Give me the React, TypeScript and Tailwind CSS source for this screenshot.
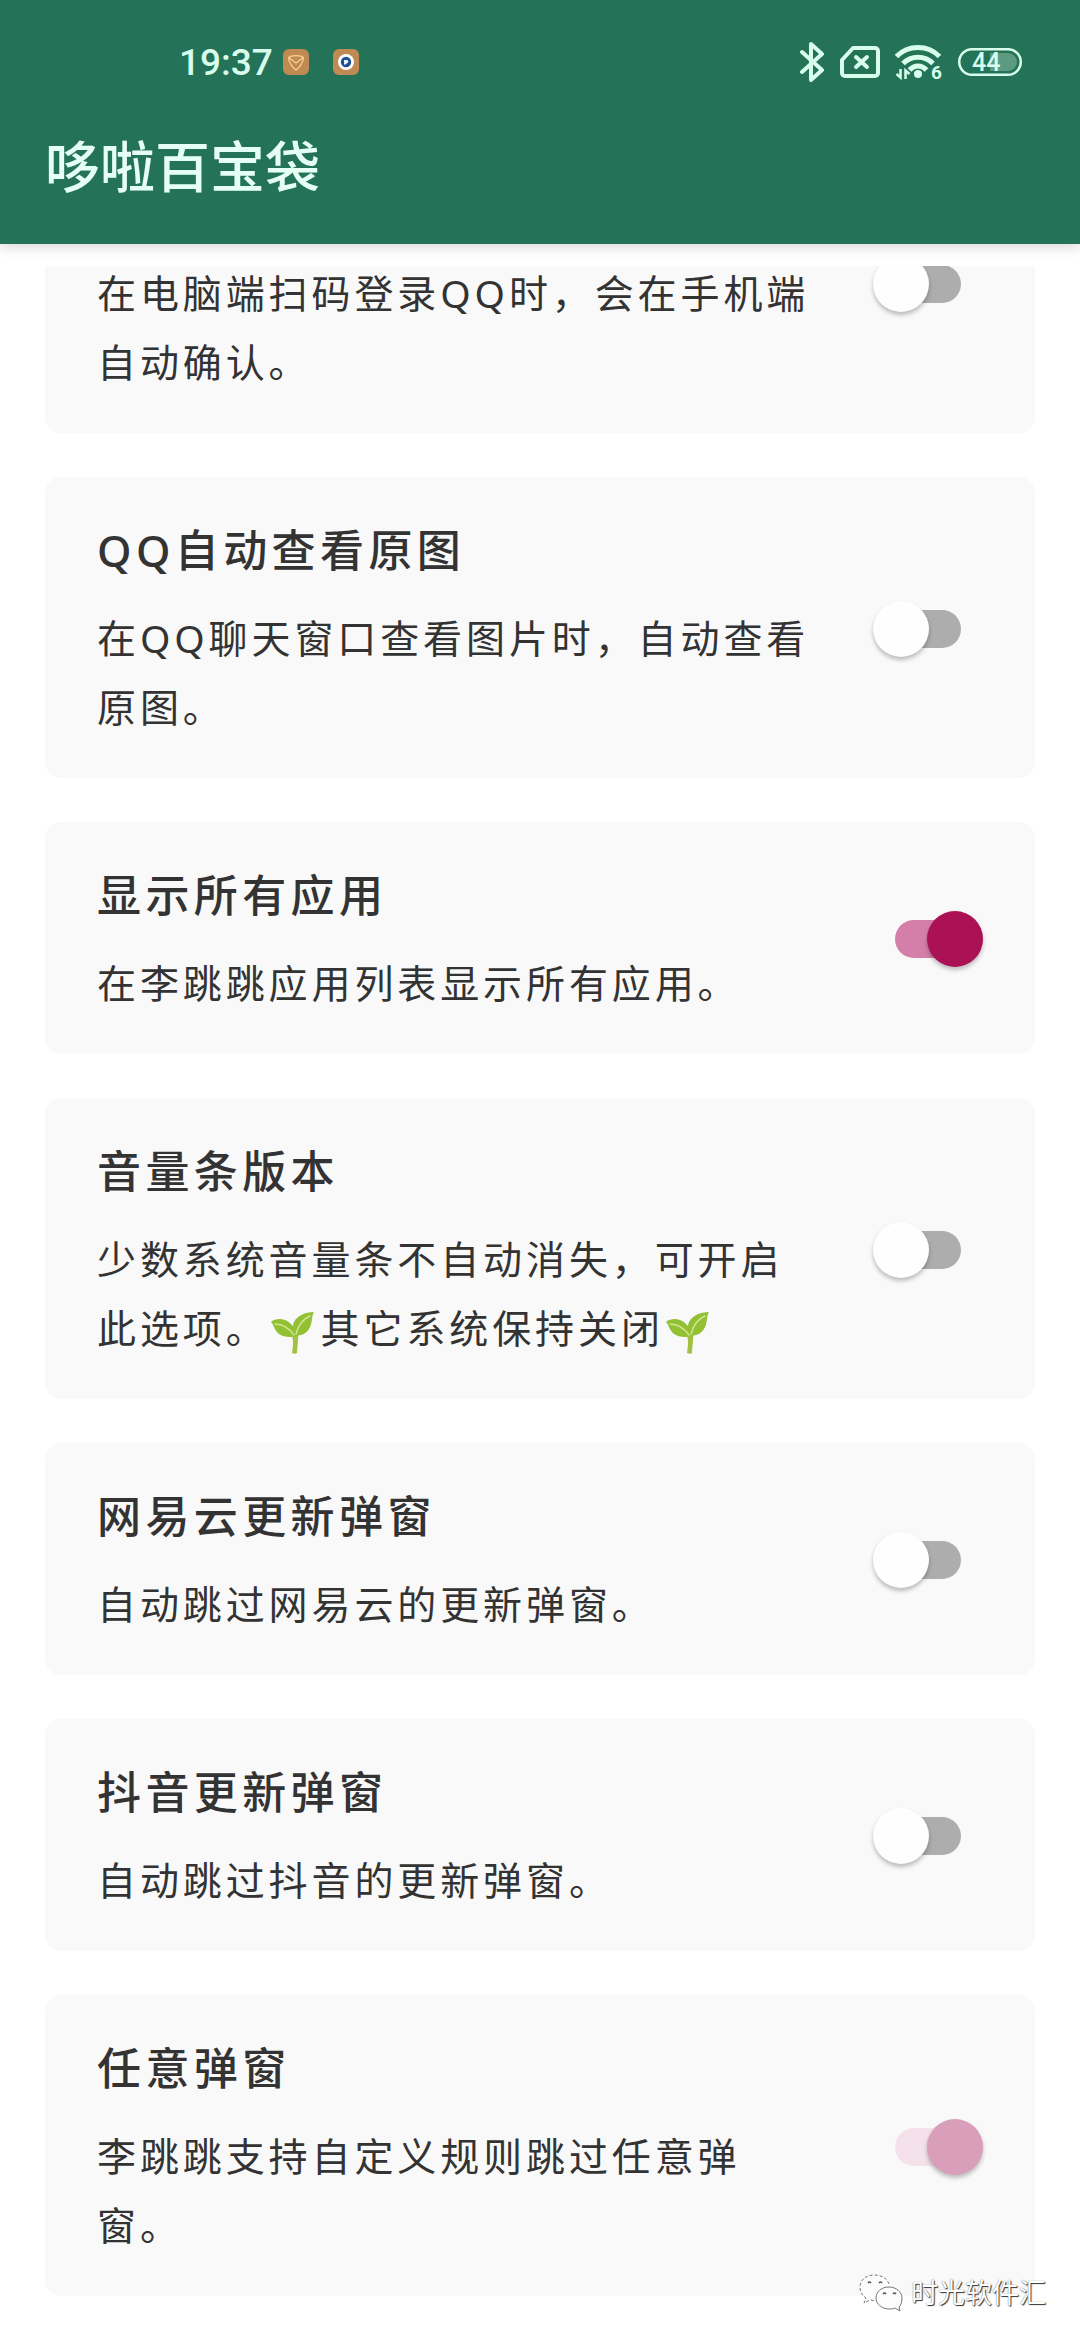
import React from 'react';

type Setting = {
  id: string;
  title?: string;
  desc: string;
  checked?: boolean;
  disabled?: boolean;
};

const settings: Setting[] = [
  { id: 'qq-login', desc: '在电脑端扫码登录QQ时，会在手机端自动确认。' },
  { id: 'qq-photo', title: 'QQ自动查看原图', desc: '在QQ聊天窗口查看图片时，自动查看原图。' },
  { id: 'all-apps', title: '显示所有应用', desc: '在李跳跳应用列表显示所有应用。', checked: true },
  { id: 'volume', title: '音量条版本', desc: '少数系统音量条不自动消失，可开启此选项。🌱其它系统保持关闭🌱' },
  { id: 'netease', title: '网易云更新弹窗', desc: '自动跳过网易云的更新弹窗。' },
  { id: 'douyin', title: '抖音更新弹窗', desc: '自动跳过抖音的更新弹窗。' },
  { id: 'any', title: '任意弹窗', desc: '李跳跳支持自定义规则跳过任意弹窗。', checked: true, disabled: true },
];

function Seedling() {
  return (
    <svg viewBox="0 0 44 42" className="mr-1.5 ml-0.5 inline-block h-[42px] w-11 align-middle">
      <path d="M20 21c3 6 2 13 1 20 2 1 4 1 5 0 0-7 2-14 1-21z" fill="#a3c244" />
      <path d="M0 10C6 5 15 7 20 12c4 4 5 8 4 12-4 2-12 1-16-2C3 18 3 13 0 10z" fill="#93c136" />
      <path d="M43 0C34 0 26 4 23 10c-2 5-1 10 1 14 5 0 11-2 14-7 4-6 2-12 5-17z" fill="#93c136" />
      <path d="M4 12c7 0 14 4 19 11M39 4c-7 3-12 10-14 18" fill="none" stroke="#d2e58b" strokeWidth="1.5" strokeLinecap="round" />
    </svg>
  );
}

function Desc({ text }: { text: string }) {
  const parts = text.split('🌱');
  return (
    <p className="text-[39px] leading-[69px] tracking-widest">
      {parts.map((part, i) => (
        <React.Fragment key={i}>
          {part}
          {i < parts.length - 1 && <Seedling />}
        </React.Fragment>
      ))}
    </p>
  );
}

function Switch({ id, checked, disabled }: { id: string; checked?: boolean; disabled?: boolean }) {
  return (
    <input
      id={id}
      type="checkbox"
      role="switch"
      defaultChecked={checked}
      disabled={disabled}
      className="relative h-14 w-[110px] shrink-0 appearance-none before:absolute before:top-[9px] before:left-[22px] before:h-[38px] before:w-[66px] before:rounded-full before:bg-[#adadad] after:absolute after:top-0 after:left-0 after:size-14 after:rounded-full after:bg-[#fefefe] after:shadow-[0_3px_4px_rgba(0,0,0,0.25)] checked:before:bg-[#d47faa] checked:after:left-[54px] checked:after:bg-[#ab1155] disabled:before:bg-[#f5e1ea] disabled:after:bg-[#d99fba]"
    />
  );
}

function SettingCard({ id, title, desc, checked, disabled }: Setting) {
  return (
    <li className="flex items-center gap-[52px] rounded-2xl bg-[#f9f9f9] px-[52px] pt-[39px] pb-[37px]">
      <label htmlFor={id} className="flex flex-1 flex-col gap-[18px]">
        {title ? (
          <h2 className="text-[44px] leading-[69px] font-medium tracking-widest">{title}</h2>
        ) : (
          <div className="h-[69px]" />
        )}
        <Desc text={desc} />
      </label>
      <Switch id={id} checked={checked} disabled={disabled} />
    </li>
  );
}

function StatusBar() {
  return (
    <div className="flex h-[90px] items-center justify-between pt-[34px] pr-[58px] pl-[179px] text-[#d8fdec]">
      <div className="flex items-center">
        <span className="mr-2.5 font-['Roboto'] text-[37px] leading-none font-medium">19:37</span>
        <svg viewBox="0 0 26 26" className="mr-6 size-[26px]">
          <rect width="26" height="26" rx="6" fill="#c08a55" />
          <path d="M5.5 8.500C8 6 18 6 20.5 8.500 20 14 17 18 13 21 9 18 6 14 5.500 8.500zl7.500 5.500 7.500-5.500" fill="none" stroke="#fbd38d" strokeWidth="1.2" />
        </svg>
        <svg viewBox="0 0 26 26" className="size-[26px]">
          <rect width="26" height="26" rx="6" fill="#c08a55" />
          <circle cx="13" cy="13" r="8" fill="#fff" />
          <circle cx="13" cy="13" r="5.2" fill="#20509a" />
          <path d="M11 11h3.500l1 2-3 2.500H11z" fill="#e5f5ff" />
        </svg>
      </div>
      <div className="flex items-center">
        <svg viewBox="0 0 26 40" className="mr-[15px] h-10 w-[26px]" fill="none" stroke="currentColor" strokeWidth="4" strokeLinecap="round" strokeLinejoin="round">
          <path d="M3 10l20 18-11 10V2l11 10L3 30" />
        </svg>
        <svg viewBox="0 0 40 32" className="mr-[15px] h-8 w-10" fill="none" stroke="currentColor" strokeWidth="4" strokeLinecap="round" strokeLinejoin="round">
          <path d="M13 2h22a3 3 0 0 1 3 3v22a3 3 0 0 1-3 3H5a3 3 0 0 1-3-3V14z" />
          <path d="M16 11l11 10M27 11L16 21" />
        </svg>
        <svg viewBox="0 0 48 36" className="mr-[15px] h-9 w-12 overflow-visible" fill="none" stroke="currentColor" strokeWidth="5">
          <path d="M1.5 12.500C13 .5 33 .5 44.500 12.500" />
          <path d="M8 19.500c8-8.500 22-8.500 30 0" />
          <path d="M14.5 26c5-5.500 12-5.500 17 0" />
          <circle cx="23" cy="30" r="4" fill="currentColor" stroke="none" />
          <path d="M5.5 25v8.500L1.500 30M10.500 35v-8.500l4 3.500" strokeWidth="2.5" />
          <text x="36" y="35" fill="currentColor" stroke="none" className="font-['Roboto'] text-[19px] font-bold">6</text>
        </svg>
        <svg viewBox="0 0 64 28" className="h-7 w-16 overflow-visible">
          <path d="M32 5h18a9 9 0 0 1 0 18H32z" fill="#5c9b81" />
          <rect x="1.25" y="1.25" width="61.5" height="25.5" rx="12.75" fill="none" stroke="currentColor" strokeWidth="2.5" />
          <text x="14" y="23" fill="currentColor" className="font-['Roboto'] text-[25px] font-medium">44</text>
        </svg>
      </div>
    </div>
  );
}

function Watermark() {
  return (
    <div className="absolute right-[34px] bottom-7 flex items-center gap-2 text-white">
      <svg viewBox="0 0 44 38" className="h-[38px] w-11" fill="#fcfcfc" stroke="#777" strokeWidth="1">
        <path d="M15 1C7 1 1 6 1 13c0 5 2 8 6 11l-2 5 6-3c2 .6 4 1 6 .8h14V10C28 4 22 1 15 1z" stroke="none" />
        <path d="M30 10C28 4 22 1 15 1 7 1 1 6 1 13c0 5 2 8 6 11l-2 5 6-3 5 .8" strokeDasharray="3 2" />
        <path d="M30 13c-8 0-13 5-13 11s6 11 13 11c2 0 4 0 6-1l5 3-1-4c2-2 3-5 3-9 0-6-6-11-13-11z" />
        <path d="M9 9q1.500-2 3 0M20 9q1.500-2 3 0M24 20q1.500-2 3 0M34 20q1.500-2 3 0" fill="none" stroke="#555" strokeWidth="1.5" />
      </svg>
      <span className="text-[27px] leading-10 [text-shadow:1px_1px_1px_#333,0_0_1px_#555]">时光软件汇</span>
    </div>
  );
}

export default function App() {
  return (
    <div className="relative min-h-screen bg-white pb-[45px] font-['Noto_Sans','Noto_Sans_CJK_SC',sans-serif] text-[#333]" lang="zh-CN">
      <header className="bg-[#247257] shadow-[0_3px_12px_rgba(0,0,0,0.16)]">
        <StatusBar />
        <div className="flex h-[154px] items-center px-[45px] pb-1">
          <h1 className="text-[55px] leading-[69px] font-medium text-[#e6fff5]">哆啦百宝袋</h1>
        </div>
      </header>

      <main className="mx-[45px] mt-[22px] overflow-hidden">
        {/* list is scrolled, so the first card starts above the fold */}
        <ul className="-mt-[134px] flex flex-col gap-11">
          {settings.map((item) => (
            <SettingCard key={item.id} {...item} />
          ))}
        </ul>
      </main>

      <Watermark />
    </div>
  );
}
